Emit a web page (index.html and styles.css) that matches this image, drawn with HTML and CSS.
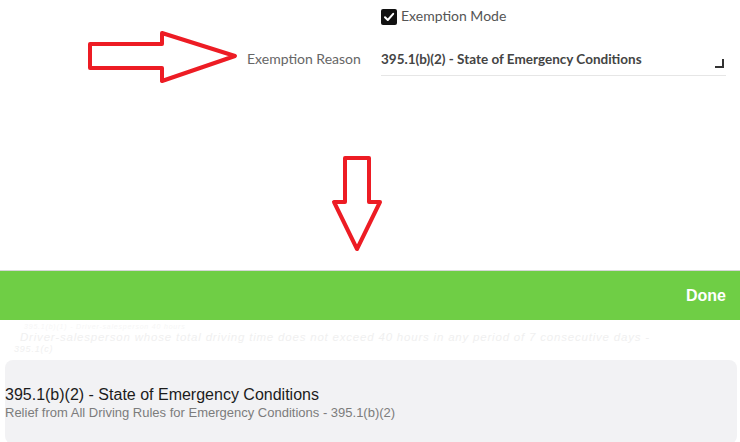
FILE: index.html
```html
<!DOCTYPE html>
<html lang="en">
<head>
    <meta charset="UTF-8">
    <meta name="viewport" content="width=device-width, initial-scale=1.0">
    <title>Exemption Reason</title>
    <link rel="stylesheet" href="styles.css">
</head>
<body>

    <div class="form">
        <div class="mode-row">
            <span class="checkbox">
                <svg width="12" height="12" viewBox="0 0 12 12"><path d="M2 6.2 L4.8 9 L10.2 2.8" fill="none" stroke="#fff" stroke-width="2" stroke-linecap="round" stroke-linejoin="round"/></svg>
            </span>
            <span class="mode-label">Exemption Mode</span>
        </div>

        <div class="reason-row">
            <svg class="arrow-right" width="152" height="54" viewBox="0 0 152 54">
                <path d="M3 13 H75 V2 L148 25 L75 50 V37 H3 Z" fill="none" stroke="#ed1c24" stroke-width="4" stroke-linejoin="round"/>
            </svg>
            <span class="reason-label">Exemption Reason</span>
            <div class="reason-field">
                <span>395.1(b)(2) - State of Emergency Conditions</span>
                <span class="corner"></span>
            </div>
        </div>

        <div class="arrow-down-wrap">
            <svg width="54" height="98" viewBox="0 0 54 98">
                <path d="M15 3 H39 V47 H50 L27 94 L4 47 H15 Z" fill="none" stroke="#ed1c24" stroke-width="4" stroke-linejoin="round"/>
            </svg>
        </div>
    </div>

    <div class="picker">
        <div class="toolbar">
            <span class="done">Done</span>
        </div>
        <div class="wheel-faded">
            <p class="faded-top">395.1(b)(1) - Driver-salesperson 40 hours</p>
            <p class="faded-main">Driver-salesperson whose total driving time does not exceed 40 hours in any period of 7 consecutive days -</p>
            <p class="faded-code">395.1(c)</p>
        </div>
        <div class="selected">
            <div class="selected-title">395.1(b)(2) - State of Emergency Conditions</div>
            <div class="selected-sub">Relief from All Driving Rules for Emergency Conditions - 395.1(b)(2)</div>
        </div>
    </div>

</body>
</html>
```
FILE: styles.css
```css
body {
    margin: 0;
    background-color: #fff;
    font-family: Lato, "Open Sans", sans-serif;
    overflow: hidden;
}

.form {
    height: 270px;
}

.mode-row {
    display: flex;
    align-items: center;
    padding: 8px 0 0 381px;
    height: 17px;
}

.checkbox {
    width: 16px;
    height: 16px;
    background-color: #111;
    border-radius: 2px;
    display: flex;
    align-items: center;
    justify-content: center;
    margin-right: 4px;
}

.mode-label {
    font-size: 14px;
    color: #555;
    margin-top: -2px;
}

.reason-row {
    display: flex;
    align-items: center;
    margin-top: 6px;
    padding-left: 87px;
}

.arrow-right {
    display: block;
}

.reason-label {
    font-size: 14px;
    color: #666;
    margin-left: 8px;
    width: 134px;
}

.reason-field {
    width: 345px;
    height: 32px;
    margin-top: 2px;
    border-bottom: 1px solid #e6e6e6;
    display: flex;
    align-items: center;
    justify-content: space-between;
    font-size: 13.5px;
    font-weight: 700;
    color: #444;
}

.corner {
    width: 7px;
    height: 7px;
    border-right: 2px solid #333;
    border-bottom: 2px solid #333;
    margin: 10px 2px 0 0;
}

.arrow-down-wrap {
    margin-top: 70px;
    padding-left: 330px;
}

.arrow-down-wrap svg {
    display: block;
}

.picker {
    font-family: "Liberation Sans", Arial, sans-serif;
}

.toolbar {
    height: 49px;
    background-color: #6fce45;
    border-top: 1px solid #d6d6d6;
    display: flex;
    align-items: center;
    justify-content: flex-end;
    padding-right: 14px;
}

.done {
    color: #fff;
    font-size: 16px;
    font-weight: bold;
}

.wheel-faded {
    height: 40px;
    color: #f0f0f0;
    font-style: italic;
    letter-spacing: 0.8px;
    overflow: hidden;
    padding-top: 2px;
    box-sizing: border-box;
}

.wheel-faded p {
    margin: 0;
}

.faded-top {
    font-size: 7px;
    line-height: 9px;
    padding-left: 24px;
    color: #f6f6f6;
}

.faded-main {
    font-size: 11.5px;
    line-height: 13px;
    padding-left: 20px;
}

.faded-code {
    font-size: 9px;
    line-height: 11px;
    padding-left: 14px;
}

.selected {
    margin: 0 3px 0 5px;
    height: 84px;
    background-color: #f2f2f4;
    border-radius: 8px;
    padding-top: 26px;
    box-sizing: border-box;
}

.selected-title {
    font-size: 16px;
    color: #1c1c1c;
}

.selected-sub {
    font-size: 13px;
    color: #7c7c7c;
    margin-top: 1px;
}
```
